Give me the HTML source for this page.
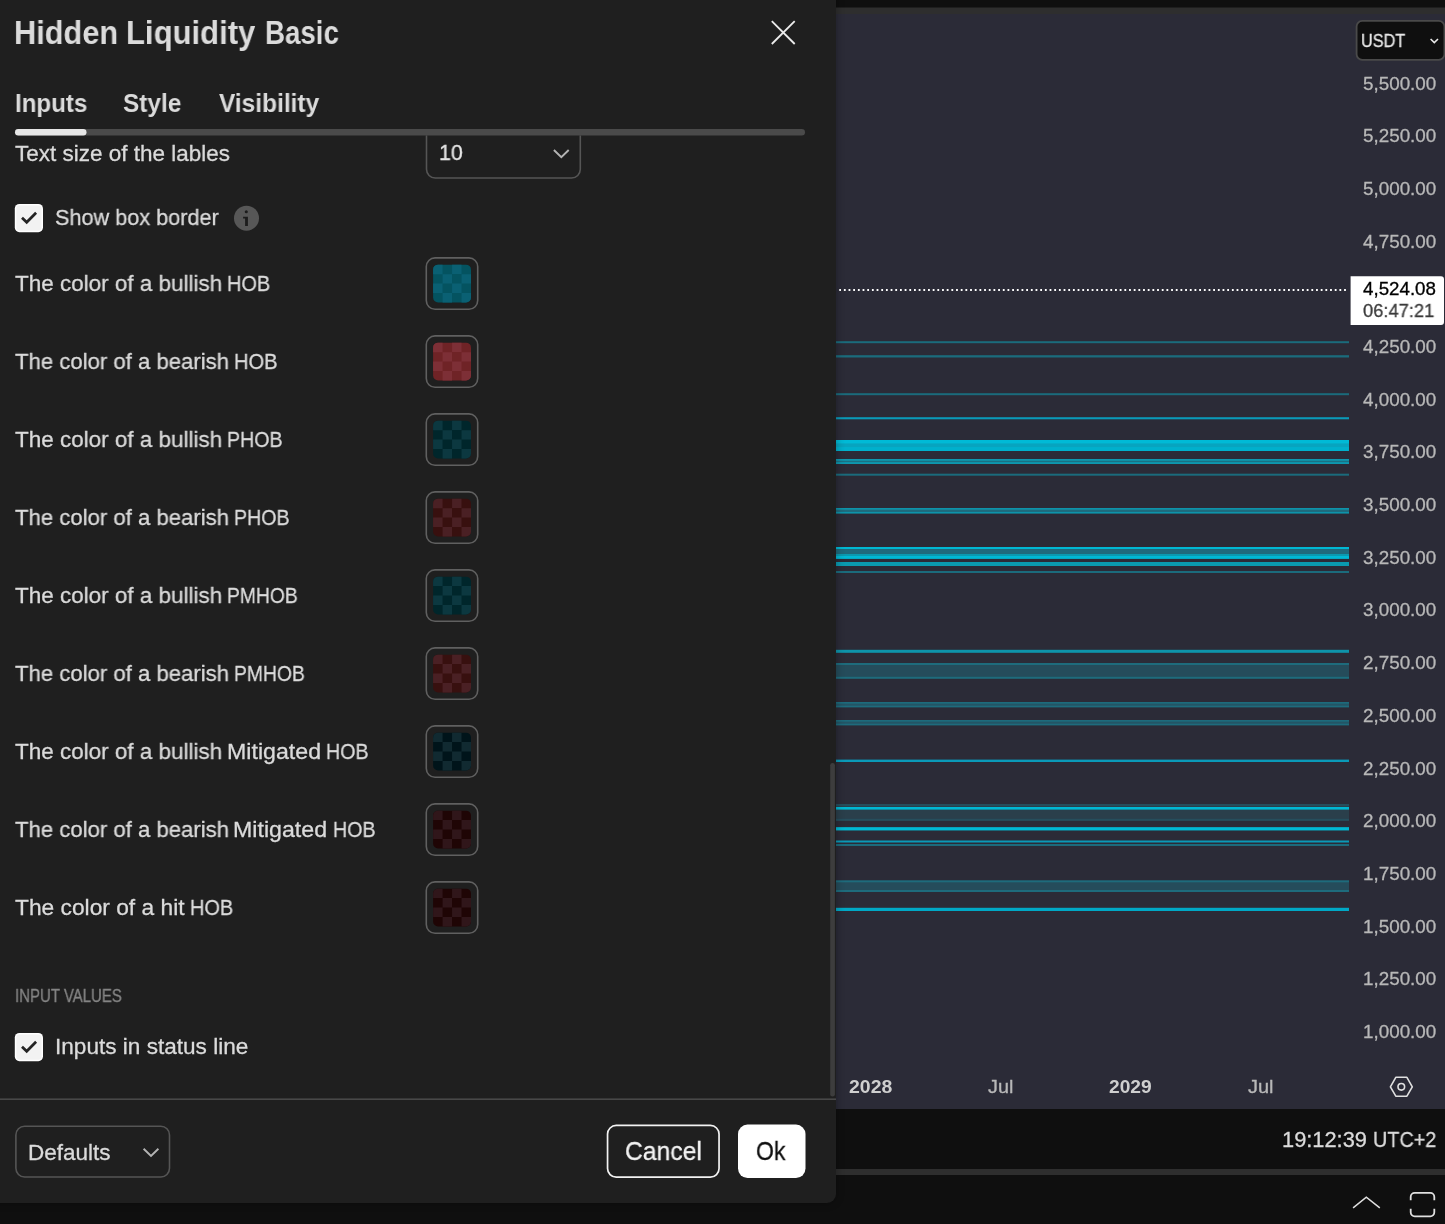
<!DOCTYPE html>
<html lang="en">
<head>
<meta charset="utf-8">
<title>Hidden Liquidity Basic</title>
<style>
*{box-sizing:border-box;margin:0;padding:0}
html,body{width:1445px;height:1224px;overflow:hidden;background:#0f0f0f}
body{position:relative;font-family:"Liberation Sans",sans-serif;color:#dbdbdb}
.abs{position:absolute}
svg.full{position:absolute;left:0;top:0;width:1445px;height:1224px}
.tx{position:absolute;left:0;top:0;width:0;height:0;line-height:1;white-space:nowrap;-webkit-text-stroke:0.3px currentColor}
.t{position:absolute;white-space:nowrap;line-height:1;transform-origin:0 0;will-change:transform}
#dlg{left:-20px;top:-20px;width:856px;height:1222.5px;background:#1f1f1f;border-radius:0 0 9px 0;box-shadow:0 0 8px rgba(0,0,0,.32)}
</style>
</head>
<body>

<!-- chart side (behind dialog) -->
<svg class="full" viewBox="0 0 1445 1224" shape-rendering="geometricPrecision">
<rect x="836" y="7.5" width="609" height="6.5" fill="#2e2e2e"/>
<rect x="836" y="14" width="609" height="1095" fill="#2b2b37"/>
<rect x="836" y="1169" width="609" height="6" fill="#2e2e2e"/>
<g id="indicator-lines">
<rect x="836" y="341.2" width="513" height="2" fill="#1b6b7c"/>
<rect x="836" y="355.2" width="513" height="2.3" fill="#1b6b7c"/>
<rect x="836" y="393.2" width="513" height="2" fill="#1b6b7c"/>
<rect x="836" y="417.2" width="513" height="2.1" fill="#0a9ab8"/>
<rect x="836" y="440" width="513" height="11" fill="#00bad6"/>
<rect x="836" y="443.4" width="513" height="4.1" fill="#07a4bf"/>
<rect x="836" y="447.5" width="513" height="3.5" fill="#00b0cc"/>
<rect x="836" y="459" width="513" height="5" fill="#0e97ae"/>
<rect x="836" y="460.8" width="513" height="1.3" fill="#1a7183"/>
<rect x="836" y="473.7" width="513" height="2" fill="#1b6b7c"/>
<rect x="836" y="508" width="513" height="5.6" fill="#0e93aa"/>
<rect x="836" y="509.7" width="513" height="2.2" fill="#1f6a7c"/>
<rect x="836" y="547" width="513" height="11.9" fill="#00b8d4"/>
<rect x="836" y="549" width="513" height="5" fill="#1f6a7c"/>
<rect x="836" y="554" width="513" height="2" fill="#0a9ab0"/>
<rect x="836" y="562" width="513" height="4" fill="#0a9ab0"/>
<rect x="836" y="571" width="513" height="2" fill="#1b6b7c"/>
<rect x="836" y="649.8" width="513" height="3" fill="#0e94ab"/>
<rect x="836" y="663" width="513" height="15.8" fill="#1e6b7c"/>
<rect x="836" y="665" width="513" height="11.8" fill="#254c5b"/>
<rect x="836" y="702" width="513" height="5.4" fill="#1e6b7c"/>
<rect x="836" y="703.7" width="513" height="2" fill="#245565"/>
<rect x="836" y="720" width="513" height="5.4" fill="#1e6b7c"/>
<rect x="836" y="721.7" width="513" height="2" fill="#245565"/>
<rect x="836" y="759.6" width="513" height="2.4" fill="#0a9ab8"/>
<rect x="836" y="804" width="513" height="16.8" fill="#2a3f4b"/>
<rect x="836" y="804" width="513" height="2" fill="#264e5c"/>
<rect x="836" y="807" width="513" height="2.6" fill="#00b8d4"/>
<rect x="836" y="818.8" width="513" height="2" fill="#264e5c"/>
<rect x="836" y="827" width="513" height="3.6" fill="#0e93aa"/>
<rect x="836" y="827.6" width="513" height="2.4" fill="#00b8d4"/>
<rect x="836" y="840.5" width="513" height="2" fill="#0a9ab8"/>
<rect x="836" y="844" width="513" height="2" fill="#1b6b7c"/>
<rect x="836" y="880.3" width="513" height="11.7" fill="#1e6b7c"/>
<rect x="836" y="882.3" width="513" height="7.7" fill="#254c5b"/>
<rect x="836" y="907.8" width="513" height="3.2" fill="#00a8c6"/>
</g>
<path d="M839.2 290 H1347.5" stroke="#ffffff" stroke-width="1.8" stroke-dasharray="1.8 2.875" fill="none"/>
<path d="M1350.6 276.2 H1441 a3 3 0 0 1 3 3 V321.9 a3 3 0 0 1 -3 3 H1350.6 Z" fill="#fff"/>
<rect x="1356.6" y="20.9" width="87.8" height="38.9" rx="5.6" fill="#0f0f0f" stroke="#4a4a4a" stroke-width="1.8"/>
<path d="M1430.6 39 L1434.3 42.6 L1438 39" stroke="#e8e8e8" stroke-width="1.6" fill="none"/>
<g stroke="#e0e0e0" fill="none">
<path d="M1395.8 1077.3 H1406.9 L1412.3 1086.8 L1406.9 1096.2 H1395.8 L1390.4 1086.8 Z" stroke-width="1.6" stroke-linejoin="round"/><circle cx="1401.3" cy="1086.8" r="3.3" stroke-width="1.6"/>
<path d="M1353.1 1207.8 L1366.3 1197.1 L1379.8 1207.8" stroke-width="1.5"/>
<path d="M1410.7 1200.2 V1196.9 a4 4 0 0 1 4 -4 H1430.3 a4 4 0 0 1 4 4 V1200.2 M1434.3 1208.8 V1212.3 a4 4 0 0 1 -4 4 H1414.7 a4 4 0 0 1 -4 -4 V1208.8" stroke-width="1.8"/>
</g>
</svg>

<!-- dialog -->
<div class="abs" id="dlg"></div>
<svg class="full" viewBox="0 0 1445 1224">
<rect x="15" y="129" width="790" height="6.5" fill="#4a4a4a" rx="3.25"/>
<rect x="15" y="129" width="71.5" height="6.5" fill="#e6e6e6" rx="3.25"/>
<path d="M771.8 21.2 L794.7 44 M794.7 21.2 L771.8 44" stroke="#ebebeb" stroke-width="1.85" fill="none"/>
<path d="M426.5 135.5 V169.3 a8.7 8.7 0 0 0 8.7 8.7 H571.6 a8.7 8.7 0 0 0 8.7 -8.7 V135.5" fill="none" stroke="#555555" stroke-width="1.6"/>
<path d="M553.9 150 L561.3 157.2 L568.7 150" stroke="#b4b4b4" stroke-width="1.9" fill="none"/>
<rect x="14.8" y="204" width="28.2" height="28.2" fill="#ffffff" rx="4.6"/>
<rect x="16.3" y="205.5" width="25.2" height="25.2" fill="#f2f2f2" rx="3.2"/>
<path d="M22 217.7 L26.7 222.3 L36.1 212.8" stroke="#232323" stroke-width="2.7" fill="none"/>
<rect x="14.8" y="1033" width="28.2" height="28.2" fill="#ffffff" rx="4.6"/>
<rect x="16.3" y="1034.5" width="25.2" height="25.2" fill="#f2f2f2" rx="3.2"/>
<path d="M22 1046.7 L26.7 1051.3 L36.1 1041.8" stroke="#232323" stroke-width="2.7" fill="none"/>
<circle cx="246.5" cy="218.2" r="12.5" fill="#575757"/><circle cx="246.3" cy="211.7" r="1.55" fill="#1c1c1c"/><path d="M243.1 216.8 H247.9 V226 H245.1 V218.6 H243.1 Z" fill="#1c1c1c"/>
<rect x="426.3" y="257.9" width="51.4" height="51.4" rx="8.7" fill="none" stroke="#606060" stroke-width="1.6"/>
<rect x="433.1" y="264.65" width="37.9" height="37.9" fill="#045360" rx="5"/>
<path d="M438.1 264.65H442.58V274.13H433.1V269.65A5 5 0 0 1 438.1 264.65zM452.05 264.65h9.47v9.47h-9.47zM442.58 274.13h9.47v9.47h-9.47zM461.53 274.13h9.47v9.47h-9.47zM433.1 283.6h9.47v9.47h-9.47zM452.05 283.6h9.47v9.47h-9.47zM442.58 293.08h9.47v9.47h-9.47zM461.53 293.08H471V297.55A5 5 0 0 1 466 302.55H461.53z" fill="#0a6073"/>
<rect x="426.3" y="335.9" width="51.4" height="51.4" rx="8.7" fill="none" stroke="#606060" stroke-width="1.6"/>
<rect x="433.1" y="342.65" width="37.9" height="37.9" fill="#6f2326" rx="5"/>
<path d="M438.1 342.65H442.58V352.13H433.1V347.65A5 5 0 0 1 438.1 342.65zM452.05 342.65h9.47v9.47h-9.47zM442.58 352.13h9.47v9.47h-9.47zM461.53 352.13h9.47v9.47h-9.47zM433.1 361.6h9.47v9.47h-9.47zM452.05 361.6h9.47v9.47h-9.47zM442.58 371.08h9.47v9.47h-9.47zM461.53 371.08H471V375.55A5 5 0 0 1 466 380.55H461.53z" fill="#7d2f36"/>
<rect x="426.3" y="413.9" width="51.4" height="51.4" rx="8.7" fill="none" stroke="#606060" stroke-width="1.6"/>
<rect x="433.1" y="420.65" width="37.9" height="37.9" fill="#00262b" rx="5"/>
<path d="M438.1 420.65H442.58V430.13H433.1V425.65A5 5 0 0 1 438.1 420.65zM452.05 420.65h9.47v9.47h-9.47zM442.58 430.13h9.47v9.47h-9.47zM461.53 430.13h9.47v9.47h-9.47zM433.1 439.6h9.47v9.47h-9.47zM452.05 439.6h9.47v9.47h-9.47zM442.58 449.08h9.47v9.47h-9.47zM461.53 449.08H471V453.55A5 5 0 0 1 466 458.55H461.53z" fill="#0c3840"/>
<rect x="426.3" y="491.9" width="51.4" height="51.4" rx="8.7" fill="none" stroke="#606060" stroke-width="1.6"/>
<rect x="433.1" y="498.65" width="37.9" height="37.9" fill="#38100f" rx="5"/>
<path d="M438.1 498.65H442.58V508.13H433.1V503.65A5 5 0 0 1 438.1 498.65zM452.05 498.65h9.47v9.47h-9.47zM442.58 508.13h9.47v9.47h-9.47zM461.53 508.13h9.47v9.47h-9.47zM433.1 517.6h9.47v9.47h-9.47zM452.05 517.6h9.47v9.47h-9.47zM442.58 527.08h9.47v9.47h-9.47zM461.53 527.08H471V531.55A5 5 0 0 1 466 536.55H461.53z" fill="#4a2024"/>
<rect x="426.3" y="569.9" width="51.4" height="51.4" rx="8.7" fill="none" stroke="#606060" stroke-width="1.6"/>
<rect x="433.1" y="576.65" width="37.9" height="37.9" fill="#00262b" rx="5"/>
<path d="M438.1 576.65H442.58V586.12H433.1V581.65A5 5 0 0 1 438.1 576.65zM452.05 576.65h9.47v9.47h-9.47zM442.58 586.12h9.47v9.47h-9.47zM461.53 586.12h9.47v9.47h-9.47zM433.1 595.6h9.47v9.47h-9.47zM452.05 595.6h9.47v9.47h-9.47zM442.58 605.07h9.47v9.47h-9.47zM461.53 605.07H471V609.55A5 5 0 0 1 466 614.55H461.53z" fill="#0c3840"/>
<rect x="426.3" y="647.9" width="51.4" height="51.4" rx="8.7" fill="none" stroke="#606060" stroke-width="1.6"/>
<rect x="433.1" y="654.65" width="37.9" height="37.9" fill="#38100f" rx="5"/>
<path d="M438.1 654.65H442.58V664.12H433.1V659.65A5 5 0 0 1 438.1 654.65zM452.05 654.65h9.47v9.47h-9.47zM442.58 664.12h9.47v9.47h-9.47zM461.53 664.12h9.47v9.47h-9.47zM433.1 673.6h9.47v9.47h-9.47zM452.05 673.6h9.47v9.47h-9.47zM442.58 683.07h9.47v9.47h-9.47zM461.53 683.07H471V687.55A5 5 0 0 1 466 692.55H461.53z" fill="#4a2024"/>
<rect x="426.3" y="725.9" width="51.4" height="51.4" rx="8.7" fill="none" stroke="#606060" stroke-width="1.6"/>
<rect x="433.1" y="732.65" width="37.9" height="37.9" fill="#00141a" rx="5"/>
<path d="M438.1 732.65H442.58V742.12H433.1V737.65A5 5 0 0 1 438.1 732.65zM452.05 732.65h9.47v9.47h-9.47zM442.58 742.12h9.47v9.47h-9.47zM461.53 742.12h9.47v9.47h-9.47zM433.1 751.6h9.47v9.47h-9.47zM452.05 751.6h9.47v9.47h-9.47zM442.58 761.07h9.47v9.47h-9.47zM461.53 761.07H471V765.55A5 5 0 0 1 466 770.55H461.53z" fill="#112a31"/>
<rect x="426.3" y="803.9" width="51.4" height="51.4" rx="8.7" fill="none" stroke="#606060" stroke-width="1.6"/>
<rect x="433.1" y="810.65" width="37.9" height="37.9" fill="#1f0505" rx="5"/>
<path d="M438.1 810.65H442.58V820.12H433.1V815.65A5 5 0 0 1 438.1 810.65zM452.05 810.65h9.47v9.47h-9.47zM442.58 820.12h9.47v9.47h-9.47zM461.53 820.12h9.47v9.47h-9.47zM433.1 829.6h9.47v9.47h-9.47zM452.05 829.6h9.47v9.47h-9.47zM442.58 839.07h9.47v9.47h-9.47zM461.53 839.07H471V843.55A5 5 0 0 1 466 848.55H461.53z" fill="#30161a"/>
<rect x="426.3" y="881.9" width="51.4" height="51.4" rx="8.7" fill="none" stroke="#606060" stroke-width="1.6"/>
<rect x="433.1" y="888.65" width="37.9" height="37.9" fill="#1f0505" rx="5"/>
<path d="M438.1 888.65H442.58V898.12H433.1V893.65A5 5 0 0 1 438.1 888.65zM452.05 888.65h9.47v9.47h-9.47zM442.58 898.12h9.47v9.47h-9.47zM461.53 898.12h9.47v9.47h-9.47zM433.1 907.6h9.47v9.47h-9.47zM452.05 907.6h9.47v9.47h-9.47zM442.58 917.07h9.47v9.47h-9.47zM461.53 917.07H471V921.55A5 5 0 0 1 466 926.55H461.53z" fill="#30161a"/>
<rect x="830.2" y="763" width="4.7" height="333.5" fill="#3d3d3d" rx="2.35"/>
<rect x="0" y="1098.4" width="836" height="1.6" fill="#484848"/>
<rect x="15.9" y="1126.2" width="153.6" height="50.8" rx="8.7" fill="none" stroke="#555555" stroke-width="1.6"/>
<path d="M143.6 1148.8 L151 1156 L158.4 1148.8" stroke="#b4b4b4" stroke-width="1.9" fill="none"/>
<rect x="607.55" y="1125.45" width="111.5" height="51.7" rx="8.65" fill="none" stroke="#f2f2f2" stroke-width="1.7"/>
<rect x="738" y="1124.6" width="67.5" height="53.4" fill="#ffffff" rx="9.5"/>
</svg>

<!-- text -->
<div class="tx" style="font-size:32.5px;font-weight:700;color:#dbdbdb;-webkit-text-stroke:0"><span class="t" style="left:14.12px;top:16.60px;transform:scaleX(0.9463)">Hidden</span> <span class="t" style="left:126.20px;top:16.60px;transform:scaleX(0.9555)">Liquidity</span> <span class="t" style="left:265.23px;top:16.60px;transform:scaleX(0.8518)">Basic</span></div>
<div class="tx" style="font-size:26px;font-weight:700;color:#dbdbdb;-webkit-text-stroke:0"><span class="t" style="left:14.63px;top:90.40px;transform:scaleX(0.9282)">Inputs</span></div>
<div class="tx" style="font-size:26px;font-weight:700;color:#dbdbdb;-webkit-text-stroke:0"><span class="t" style="left:123.25px;top:90.40px;transform:scaleX(0.9383)">Style</span></div>
<div class="tx" style="font-size:26px;font-weight:700;color:#dbdbdb;-webkit-text-stroke:0"><span class="t" style="left:218.87px;top:90.40px;transform:scaleX(0.9409)">Visibility</span></div>
<div class="tx" style="font-size:22.5px;font-weight:400;color:#dbdbdb"><span class="t" style="left:14.83px;top:142.60px;transform:scaleX(0.9996)">Text size of the lables</span></div>
<div class="tx" style="font-size:22.4px;font-weight:400;color:#e6e6e6"><span class="t" style="left:439.12px;top:142.00px;transform:scaleX(0.9549)">10</span></div>
<div class="tx" style="font-size:22.5px;font-weight:400;color:#dbdbdb"><span class="t" style="left:54.60px;top:206.70px;transform:scaleX(0.9632)">Show box border</span></div>
<div class="tx" style="font-size:22.5px;font-weight:400;color:#dbdbdb"><span class="t" style="left:14.73px;top:273.20px;transform:scaleX(0.9982)">The color of a bullish</span> <span class="t" style="left:226.85px;top:273.20px;transform:scaleX(0.8860)">HOB</span></div>
<div class="tx" style="font-size:22.5px;font-weight:400;color:#dbdbdb"><span class="t" style="left:14.74px;top:351.20px;transform:scaleX(0.9839)">The color of a bearish</span> <span class="t" style="left:233.74px;top:351.20px;transform:scaleX(0.8925)">HOB</span></div>
<div class="tx" style="font-size:22.5px;font-weight:400;color:#dbdbdb"><span class="t" style="left:14.73px;top:429.20px;transform:scaleX(0.9982)">The color of a bullish</span> <span class="t" style="left:226.87px;top:429.20px;transform:scaleX(0.8714)">PHOB</span></div>
<div class="tx" style="font-size:22.5px;font-weight:400;color:#dbdbdb"><span class="t" style="left:14.74px;top:507.20px;transform:scaleX(0.9839)">The color of a bearish</span> <span class="t" style="left:233.77px;top:507.20px;transform:scaleX(0.8714)">PHOB</span></div>
<div class="tx" style="font-size:22.5px;font-weight:400;color:#dbdbdb"><span class="t" style="left:14.73px;top:585.20px;transform:scaleX(0.9982)">The color of a bullish</span> <span class="t" style="left:226.90px;top:585.20px;transform:scaleX(0.8568)">PMHOB</span></div>
<div class="tx" style="font-size:22.5px;font-weight:400;color:#dbdbdb"><span class="t" style="left:14.74px;top:663.20px;transform:scaleX(0.9839)">The color of a bearish</span> <span class="t" style="left:233.80px;top:663.20px;transform:scaleX(0.8580)">PMHOB</span></div>
<div class="tx" style="font-size:22.5px;font-weight:400;color:#dbdbdb"><span class="t" style="left:14.73px;top:741.20px;transform:scaleX(0.9982)">The color of a bullish</span> <span class="t" style="left:226.59px;top:741.20px;transform:scaleX(1.0306)">Mitigated</span> <span class="t" style="left:325.97px;top:741.20px;transform:scaleX(0.8729)">HOB</span></div>
<div class="tx" style="font-size:22.5px;font-weight:400;color:#dbdbdb"><span class="t" style="left:14.74px;top:819.20px;transform:scaleX(0.9839)">The color of a bearish</span> <span class="t" style="left:233.49px;top:819.20px;transform:scaleX(1.0306)">Mitigated</span> <span class="t" style="left:332.87px;top:819.20px;transform:scaleX(0.8729)">HOB</span></div>
<div class="tx" style="font-size:22.5px;font-weight:400;color:#dbdbdb"><span class="t" style="left:14.72px;top:897.20px;transform:scaleX(1.0116)">The color of a hit</span> <span class="t" style="left:190.25px;top:897.20px;transform:scaleX(0.8860)">HOB</span></div>
<div class="tx" style="font-size:18px;font-weight:400;color:#848484"><span class="t" style="left:14.76px;top:987.12px;transform:scaleX(0.8330)">INPUT VALUES</span></div>
<div class="tx" style="font-size:22.5px;font-weight:400;color:#dbdbdb"><span class="t" style="left:54.74px;top:1035.60px;transform:scaleX(1.0038)">Inputs in status line</span></div>
<div class="tx" style="font-size:22.5px;font-weight:400;color:#dbdbdb"><span class="t" style="left:27.75px;top:1141.70px;transform:scaleX(1.0011)">Defaults</span></div>
<div class="tx" style="font-size:26px;font-weight:400;color:#f2f2f2"><span class="t" style="left:624.72px;top:1137.90px;transform:scaleX(0.9490)">Cancel</span></div>
<div class="tx" style="font-size:26px;font-weight:400;color:#0f0f0f"><span class="t" style="left:756.49px;top:1137.90px;transform:scaleX(0.8857)">Ok</span></div>
<div class="tx" style="font-size:18px;font-weight:400;color:#e8e8e8"><span class="t" style="left:1360.95px;top:32.22px;transform:scaleX(0.9025)">USDT</span></div>
<div class="tx" style="font-size:18.5px;font-weight:400;color:#000000"><span class="t" style="left:1362.68px;top:279.61px;transform:scaleX(1.0131)">4,524.08</span></div>
<div class="tx" style="font-size:18.5px;font-weight:400;color:#3a3a3a"><span class="t" style="left:1362.82px;top:301.81px;transform:scaleX(0.9896)">06:47:21</span></div>
<div class="tx" style="font-size:21.5px;font-weight:400;color:#dbdbdb"><span class="t" style="left:1282.27px;top:1129.63px;transform:scaleX(1.0151)">19:12:39</span> <span class="t" style="left:1373.32px;top:1129.63px;transform:scaleX(0.9208)">UTC+2</span></div>
<div class="tx" style="font-size:18.5px;font-weight:700;color:#cfcfcf;-webkit-text-stroke:0"><span class="t" style="left:848.66px;top:1078.20px;transform:scaleX(1.0532)">2028</span></div>
<div class="tx" style="font-size:18.5px;font-weight:400;color:#b8b8b8"><span class="t" style="left:987.86px;top:1078.21px;transform:scaleX(1.0714)">Jul</span></div>
<div class="tx" style="font-size:18.5px;font-weight:700;color:#cfcfcf;-webkit-text-stroke:0"><span class="t" style="left:1108.87px;top:1078.20px;transform:scaleX(1.0376)">2029</span></div>
<div class="tx" style="font-size:18.5px;font-weight:400;color:#b8b8b8"><span class="t" style="left:1247.66px;top:1078.21px;transform:scaleX(1.0805)">Jul</span></div>
<div class="tx" style="font-size:18.5px;font-weight:400;color:#b8b8b8"><span class="t" style="left:1362.78px;top:74.51px;transform:scaleX(1.0177)">5,500.00</span></div>
<div class="tx" style="font-size:18.5px;font-weight:400;color:#b8b8b8"><span class="t" style="left:1362.78px;top:127.21px;transform:scaleX(1.0177)">5,250.00</span></div>
<div class="tx" style="font-size:18.5px;font-weight:400;color:#b8b8b8"><span class="t" style="left:1362.78px;top:179.91px;transform:scaleX(1.0177)">5,000.00</span></div>
<div class="tx" style="font-size:18.5px;font-weight:400;color:#b8b8b8"><span class="t" style="left:1362.78px;top:232.61px;transform:scaleX(1.0177)">4,750.00</span></div>
<div class="tx" style="font-size:18.5px;font-weight:400;color:#b8b8b8"><span class="t" style="left:1362.78px;top:337.91px;transform:scaleX(1.0177)">4,250.00</span></div>
<div class="tx" style="font-size:18.5px;font-weight:400;color:#b8b8b8"><span class="t" style="left:1362.78px;top:390.61px;transform:scaleX(1.0177)">4,000.00</span></div>
<div class="tx" style="font-size:18.5px;font-weight:400;color:#b8b8b8"><span class="t" style="left:1362.78px;top:443.31px;transform:scaleX(1.0177)">3,750.00</span></div>
<div class="tx" style="font-size:18.5px;font-weight:400;color:#b8b8b8"><span class="t" style="left:1362.78px;top:496.01px;transform:scaleX(1.0177)">3,500.00</span></div>
<div class="tx" style="font-size:18.5px;font-weight:400;color:#b8b8b8"><span class="t" style="left:1362.78px;top:548.71px;transform:scaleX(1.0177)">3,250.00</span></div>
<div class="tx" style="font-size:18.5px;font-weight:400;color:#b8b8b8"><span class="t" style="left:1362.78px;top:601.41px;transform:scaleX(1.0177)">3,000.00</span></div>
<div class="tx" style="font-size:18.5px;font-weight:400;color:#b8b8b8"><span class="t" style="left:1362.78px;top:654.11px;transform:scaleX(1.0177)">2,750.00</span></div>
<div class="tx" style="font-size:18.5px;font-weight:400;color:#b8b8b8"><span class="t" style="left:1362.78px;top:706.81px;transform:scaleX(1.0177)">2,500.00</span></div>
<div class="tx" style="font-size:18.5px;font-weight:400;color:#b8b8b8"><span class="t" style="left:1362.78px;top:759.51px;transform:scaleX(1.0177)">2,250.00</span></div>
<div class="tx" style="font-size:18.5px;font-weight:400;color:#b8b8b8"><span class="t" style="left:1362.78px;top:812.21px;transform:scaleX(1.0177)">2,000.00</span></div>
<div class="tx" style="font-size:18.5px;font-weight:400;color:#b8b8b8"><span class="t" style="left:1362.78px;top:864.81px;transform:scaleX(1.0177)">1,750.00</span></div>
<div class="tx" style="font-size:18.5px;font-weight:400;color:#b8b8b8"><span class="t" style="left:1362.78px;top:917.51px;transform:scaleX(1.0177)">1,500.00</span></div>
<div class="tx" style="font-size:18.5px;font-weight:400;color:#b8b8b8"><span class="t" style="left:1362.78px;top:970.21px;transform:scaleX(1.0177)">1,250.00</span></div>
<div class="tx" style="font-size:18.5px;font-weight:400;color:#b8b8b8"><span class="t" style="left:1362.78px;top:1022.91px;transform:scaleX(1.0177)">1,000.00</span></div>

</body>
</html>
